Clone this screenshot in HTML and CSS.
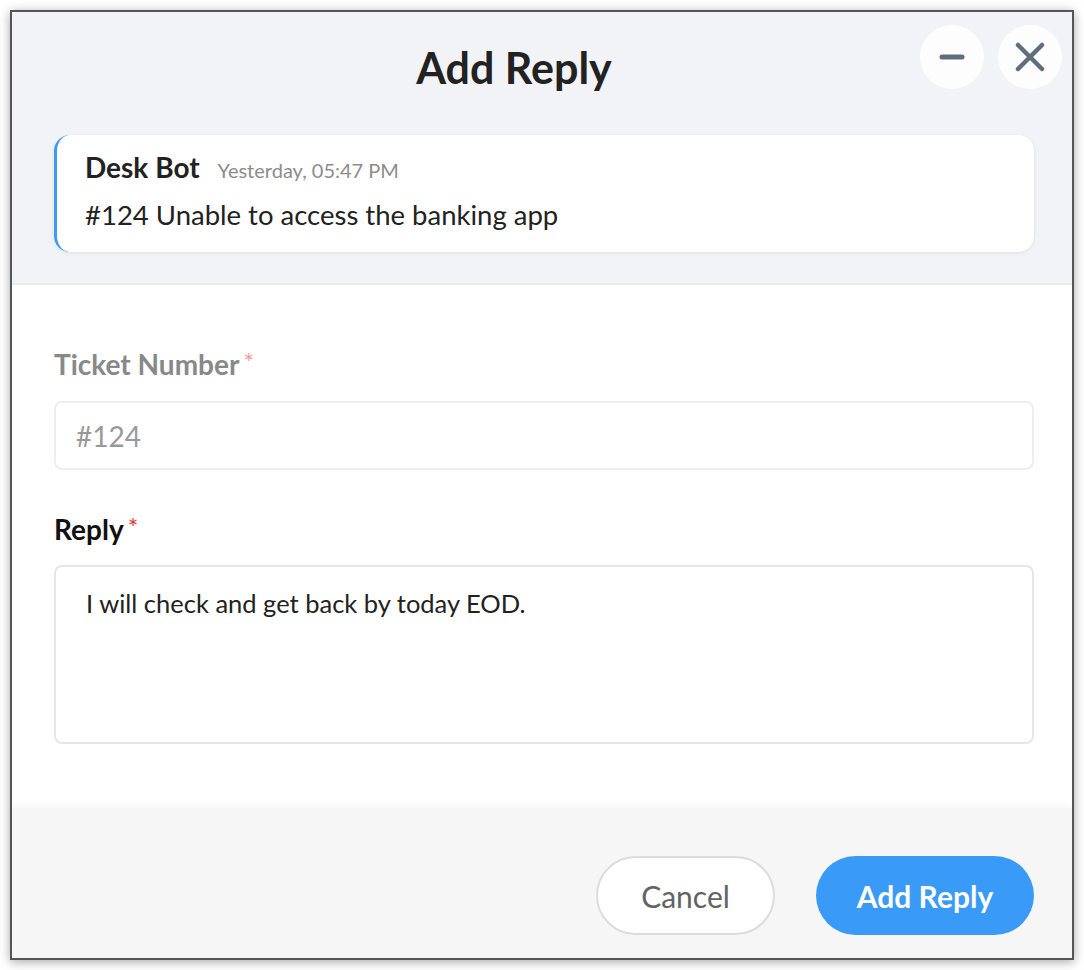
FILE: index.html
```html
<!DOCTYPE html>
<html>
<head>
<meta charset="utf-8">
<title>Add Reply</title>
<link rel="stylesheet" href="styles.css">
</head>
<body>
<div class="window">
  <header class="header">
    <div class="header-row">
      <h1 class="title">Add Reply</h1>
      <div class="win-actions">
        <button class="circle-btn" aria-label="Minimize">
          <svg width="30" height="30" viewBox="0 0 30 30"><line x1="5" y1="15" x2="25" y2="15" stroke="#5f6e7d" stroke-width="5" stroke-linecap="round"/></svg>
        </button>
        <button class="circle-btn" aria-label="Close">
          <svg width="32" height="32" viewBox="0 0 32 32"><path d="M4 4 L28 28 M28 4 L4 28" stroke="#5f6e7d" stroke-width="4.5" stroke-linecap="round" fill="none"/></svg>
        </button>
      </div>
    </div>
    <div class="msg-card">
      <div class="msg-head"><span class="msg-name">Desk Bot</span><span class="msg-time">Yesterday, 05:47 PM</span></div>
      <div class="msg-text">#124 Unable to access the banking app</div>
    </div>
  </header>
  <main class="form-body">
    <label class="field-label muted">Ticket Number<span class="req light">*</span></label>
    <input class="text-input" type="text" value="#124" disabled>
    <label class="field-label strong second">Reply<span class="req">*</span></label>
    <textarea class="text-area">I will check and get back by today EOD.</textarea>
  </main>
  <footer class="footer">
    <button class="btn btn-cancel">Cancel</button>
    <button class="btn btn-primary">Add Reply</button>
  </footer>
</div>
</body>
</html>
```

FILE: styles.css
```css
* { box-sizing: border-box; }
html, body { margin: 0; padding: 0; background: #ffffff; }
body { font-family: Lato, "Noto Sans", sans-serif; color: #222; }

.window {
  margin: 10px;
  width: 1064px;
  height: 950px;
  border: 2px solid #555;
  box-shadow: 0 2px 10px rgba(0,0,0,0.35);
  display: flex;
  flex-direction: column;
  overflow: hidden;
  background: #fff;
}

.header {
  flex: none;
  height: 273px;
  background: #f2f3f7;
  padding: 13px 0 0 0;
  border-bottom: 2px solid #e8e9ed;
}
.header-row {
  display: flex;
  align-items: flex-start;
  height: 67px;
  padding-right: 10px;
}
.title {
  flex: 1;
  margin: 19px 0 0 0;
  padding-left: 96px;
  text-align: center;
  font-size: 43px;
  line-height: 48px;
  font-weight: 700;
  color: #222;
}
.win-actions { display: flex; gap: 14px; }
.circle-btn {
  width: 64px;
  height: 64px;
  border-radius: 50%;
  border: none;
  background: #fdfdfd;
  display: flex;
  align-items: center;
  justify-content: center;
  padding: 0;
}

.msg-card {
  margin: 43px 38px 0 42px;
  height: 117px;
  background: #fff;
  border-radius: 16px;
  border-left: 3px solid #3d9bf3;
  box-shadow: 0 1px 4px rgba(0,0,0,0.08);
  padding: 16px 20px 0 28px;
}
.msg-head { display: flex; align-items: baseline; height: 32px; line-height: 32px; }
.msg-name { font-size: 28px; font-weight: 700; color: #222; }
.msg-time { font-size: 20px; color: #8c8c8c; margin-left: 18px; }
.msg-text { margin-top: 16px; font-size: 27.5px; line-height: 32px; color: #222; }

.form-body {
  flex: none;
  height: 523px;
  display: flex;
  flex-direction: column;
  padding: 63px 38px 0 42px;
}
.field-label {
  font-size: 28px;
  line-height: 32px;
  height: 32px;
  font-weight: 700;
}
.field-label.muted { color: #888; }
.field-label.strong { color: #111; }
.field-label.second { margin-top: 43px; }
.req { font-size: 25px; line-height: 0; color: #e53935; margin-left: 4px; vertical-align: 3px; font-weight: 400; }
.req.light { color: #f29a9a; }

.text-input {
  margin-top: 21px;
  height: 69px;
  flex: none;
  border: 2px solid #eeeeee;
  border-radius: 8px;
  background: #fff;
  padding: 0 20px;
  font-family: inherit;
  font-size: 28px;
  color: #999;
  outline: none;
}
.text-input:disabled { background: #fff; color: #999; -webkit-text-fill-color: #999; opacity: 1; }
.text-area {
  margin-top: 20px;
  height: 179px;
  flex: none;
  border: 2px solid #e6e6e6;
  border-radius: 8px;
  padding: 20px 30px;
  font-family: inherit;
  font-size: 25.5px;
  line-height: 32px;
  color: #222;
  resize: none;
  outline: none;
  overflow: hidden;
}

.footer {
  flex: none;
  height: 150px;
  background: #f6f6f6;
  box-shadow: 0 -3px 8px rgba(0,0,0,0.035);
  display: flex;
  justify-content: flex-end;
  align-items: flex-start;
  gap: 41px;
  padding: 48px 38px 0 0;
}
.btn {
  height: 79px;
  border-radius: 40px;
  font-family: inherit;
  font-size: 30px;
  padding: 0;
}
.btn-cancel {
  width: 179px;
  background: #fff;
  border: 2px solid #dcdcdc;
  color: #636363;
}
.btn-primary {
  width: 218px;
  background: #399bf7;
  border: none;
  color: #fff;
  font-weight: 700;
}
```
